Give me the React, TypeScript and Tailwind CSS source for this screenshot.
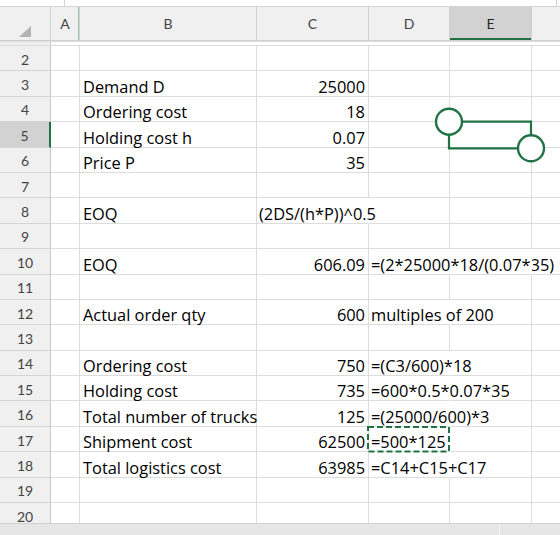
import React from "react";

/**
 * Excel-style sheet: EOQ / logistics cost worksheet
 * Grid is laid out with flex rows, the connector shape and the
 * copy marquee are drawn on top in one SVG overlay.
 */

interface SheetRow {
  n: number;
  b?: string;
  c?: string;
  /** C holds text that flows left-aligned into D */
  cText?: boolean;
  d?: string;
  /** right gridlines hidden where text overflows */
  hideC?: boolean;
  hideD?: boolean;
  hideE?: boolean;
}

const rows: SheetRow[] = [
  { n: 2 },
  { n: 3, b: "Demand D", c: "25000" },
  { n: 4, b: "Ordering cost", c: "18" },
  { n: 5, b: "Holding cost h", c: "0.07" },
  { n: 6, b: "Price P", c: "35" },
  { n: 7 },
  { n: 8, b: "EOQ", c: "(2DS/(h*P))^0.5", cText: true, hideC: true },
  { n: 9 },
  { n: 10, b: "EOQ", c: "606.09", d: "=(2*25000*18/(0.07*35)", hideD: true, hideE: true },
  { n: 11 },
  { n: 12, b: "Actual order qty", c: "600", d: "multiples of 200", hideD: true },
  { n: 13 },
  { n: 14, b: "Ordering cost", c: "750", d: "=(C3/600)*18", hideD: true },
  { n: 15, b: "Holding cost", c: "735", d: "=600*0.5*0.07*35", hideD: true },
  { n: 16, b: "Total number of trucks", c: "125", d: "=(25000/600)*3", hideD: true },
  { n: 17, b: "Shipment cost", c: "62500", d: "=500*125", hideD: true },
  { n: 18, b: "Total logistics cost", c: "63985", d: "=C14+C15+C17", hideD: true },
  { n: 19 },
  { n: 20 },
];

function Row({ r }: { r: SheetRow }) {
  const selected = r.n === 5;
  return (
    <div className="flex h-[25.4px] shrink-0">
      {/* row number */}
      <div
        className={`w-[51px] shrink-0 flex items-center justify-center pt-[2px] border-b border-[#d4d4d4] text-[14px] text-[#444] ${
          selected
            ? "bg-[#d2d2d2] border-r-2 border-r-[#217346]"
            : "bg-[#f0f0f0] border-r border-r-[#c8c8c8]"
        }`}
        style={{ fontFamily: "Lato, sans-serif" }}
      >
        {r.n}
      </div>
      <div className="w-[29px] shrink-0 border-r border-b border-[#dcdcdc]" />
      <div className="w-[177px] shrink-0 flex items-end pl-[3px] border-r border-b border-[#dcdcdc] whitespace-nowrap leading-[19px]">
        {r.b}
      </div>
      <div
        className={`w-[112px] shrink-0 flex items-end border-r border-b border-[#dcdcdc] whitespace-nowrap leading-[19px] ${
          r.cText ? "justify-start pl-[2px]" : "justify-end pr-[3px]"
        } ${r.hideC ? "border-r-white" : ""}`}
      >
        {r.c}
      </div>
      <div
        className={`w-[81px] shrink-0 flex items-end pl-[2px] border-r border-b border-[#dcdcdc] whitespace-nowrap leading-[19px] ${
          r.hideD ? "border-r-white" : ""
        }`}
      >
        {r.d}
      </div>
      <div
        className={`w-[82px] shrink-0 border-r border-b border-[#dcdcdc] ${
          r.hideE ? "border-r-white" : ""
        }`}
      />
      <div className="flex-1 border-b border-[#dcdcdc]" />
    </div>
  );
}

export default function App() {
  return (
    <div
      className="relative w-[560px] h-[535px] overflow-hidden bg-white flex flex-col text-[16.4px] text-black"
      style={{ fontFamily: "'Open Sans', Lato, sans-serif" }}
    >
      {/* ===== formula bar remnant ===== */}
      <div className="h-[7px] shrink-0 flex border-b border-[#d4d4d4]">
        <div className="w-[65px] border-r border-[#d4d4d4]" />
        <div className="w-[492px] border-r border-[#d4d4d4]" />
      </div>

      {/* ===== column headers ===== */}
      <div
        className="h-[34px] shrink-0 flex border-b border-[#d0d0d0] bg-[#f0f0f0] text-[14px] text-[#444]"
        style={{ fontFamily: "Lato, sans-serif" }}
      >
        <div className="w-[51px] shrink-0 relative border-r border-[#d0d0d0]">
          <svg className="absolute left-[19px] top-[19px]" width="12" height="11" viewBox="0 0 12 11">
            <polygon points="12,0 12,11 0,11" fill="#b3b3b3" />
          </svg>
        </div>
        <div className="w-[29px] shrink-0 flex items-center justify-center border-r border-[#d0d0d0] shadow-[inset_-1px_0_0_#9cc5ae]">
          A
        </div>
        <div className="w-[177px] shrink-0 flex items-center justify-center border-r border-[#d0d0d0]">B</div>
        <div className="w-[112px] shrink-0 flex items-center justify-center border-r border-[#d0d0d0]">C</div>
        <div className="w-[81px] shrink-0 flex items-center justify-center border-r border-[#d0d0d0]">D</div>
        <div className="w-[82px] shrink-0 flex items-center justify-center border-r border-[#d0d0d0] bg-[#d2d2d2] text-[#262626] shadow-[inset_0_-2px_0_#217346]">
          E
        </div>
        <div className="flex-1" />
      </div>

      {/* ===== hidden row 1 marker ===== */}
      <div className="h-[5px] shrink-0 flex border-t border-b border-[#dcdcdc]">
        <div className="w-[51px] bg-[#f0f0f0] border-r border-[#c8c8c8]" />
        <div className="flex-1" />
      </div>

      {/* ===== cells ===== */}
      <div className="flex-1 flex flex-col overflow-hidden">
        {rows.map((r) => (
          <Row key={r.n} r={r} />
        ))}
      </div>

      {/* ===== scroll bar strip ===== */}
      <div className="h-[12px] shrink-0 flex bg-[#e6e6e6] border-t border-[#d0d0d0]">
        <div className="w-[500px] border-r border-[#f4f4f4]" />
      </div>

      {/* ===== shape + copy marquee overlay ===== */}
      <svg className="absolute left-0 top-0 pointer-events-none" width="560" height="535" viewBox="0 0 560 535">
        <path
          d="M463 121.7 H531 V135 M449 135 V148.3 H517"
          fill="none"
          stroke="#217346"
          strokeWidth="2.2"
        />
        <circle cx="449" cy="121.7" r="13" fill="white" stroke="#217346" strokeWidth="2.4" />
        <circle cx="531" cy="148.3" r="13" fill="white" stroke="#217346" strokeWidth="2.4" />
        <rect
          x="368"
          y="427"
          width="81"
          height="24.5"
          fill="none"
          stroke="#217346"
          strokeWidth="2"
          strokeDasharray="6 3"
        />
      </svg>
    </div>
  );
}
